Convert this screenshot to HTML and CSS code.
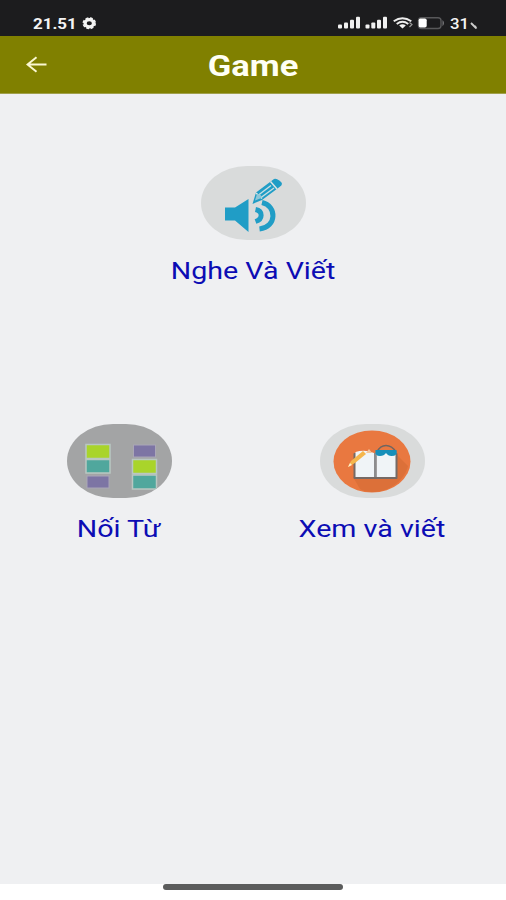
FILE: index.html
```html
<!DOCTYPE html>
<html lang="vi">
<head>
<meta charset="utf-8">
<title>Game</title>
<link rel="stylesheet" href="styles.css">
</head>
<body>
<div class="status">
  <span class="clock">21.51</span>
  <svg class="gear" viewBox="0 0 16 14"><ellipse cx="7.300" cy="6.300" rx="4.200" ry="3.600" fill="none" stroke="#f4f4f4" stroke-width="3.200"/><ellipse cx="7.300" cy="6.300" rx="6" ry="5.200" fill="none" stroke="#f4f4f4" stroke-width="1.600" stroke-dasharray="2.800 1.600"/></svg>
  <svg class="signals" viewBox="0 0 134 16">
    <g fill="#f1f1f1">
      <rect x="0" y="8.6" width="4" height="3.9" rx="1"/><rect x="6" y="6.6" width="4" height="5.9" rx="1"/><rect x="12" y="3.8" width="4" height="8.7" rx="1"/><rect x="18" y=".8" width="4" height="11.7" rx="1"/>
      <rect x="27.5" y="8.6" width="4" height="3.9" rx="1"/><rect x="33.3" y="6.6" width="4" height="5.9" rx="1"/><rect x="39" y="3.8" width="4" height="8.7" rx="1"/><rect x="45" y=".8" width="4" height="11.7" rx="1"/>
    </g>
    <path d="M55.7 5.3Q64.5-.9 73.3 5.3M58.7 8Q64.5 3.600 70.3 8" fill="none" stroke="#ededed" stroke-width="1.9"/>
    <path d="M61.2 9.500Q64.5 7 67.8 9.500L64.5 12.5Z" fill="#f1f1f1"/>
    <path d="M71.500 6.500l2.500 2-2.500 2.500" fill="none" stroke="#999" stroke-width="1.2"/>
    <rect x="80.5" y="1.7" width="22.5" height="10.8" rx="3" fill="none" stroke="#58585a" stroke-width="1.4"/>
    <path d="M104.500 4q3 3 0 6.3z" fill="#77777a"/>
    <rect x="80.7" y="2.5" width="8" height="9" rx="1.8" fill="#fff"/>
  </svg>
  <span class="percent">31</span>
  <svg class="tick" viewBox="0 0 8 8"><path d="M1 1l5 5M5 3.8l1.3 2.8" stroke="#ccc" stroke-width="1.9" fill="none"/></svg>
</div>
<header class="bar">
  <svg class="back" viewBox="0 0 22 18"><path d="M20.5 8.500H1.5M10.5 1.300L1.5 8.500l9 7.2" fill="none" stroke="#fbf8d2" stroke-width="2"/></svg>
  <h1><span class="title">Game</span></h1>
</header>
<main class="games">
  <a class="game wide">
    <svg class="pic light" viewBox="0 0 105 74">
      <g fill="#209dc6">
        <path d="M24 41.5H34L47.500 33V66L34 54.500H24Z"/>
        <path d="M54.500 43.500C62 45 62 53 54.500 55.500" fill="none" stroke="#209dc6" stroke-width="5"/>
        <path d="M61 36.500C76 40 76 61 58.500 63" fill="none" stroke="#209dc6" stroke-width="5"/>
        <path d="M51.500 38L55 26.500L73 13Q76 12 80.500 16.500Q82 19 78.500 21L61 34Z"/>
      </g>
      <path d="M57.500 29L70 19.500M60 31.500L73 22" stroke="#c9dde1" stroke-width="1.500"/>
      <path d="M69.500 15.500L76 23M55 27L61 32.500" stroke="#dce3e3" stroke-width="1.500"/>
      <path d="M56 28Q61 28 60.500 32L54 34.500Z" fill="#8fc7d7"/>
    </svg>
    <span class="name">Nghe Và Viết</span>
  </a>
  <a class="game">
    <svg class="pic dark" viewBox="0 0 105 74">
      <g stroke="#b9c7c2" stroke-width="1.500">
        <rect x="19" y="20.500" width="24" height="14" fill="#a9d42b"/><rect x="19" y="35.500" width="24" height="13.500" fill="#50a79d"/>
        <rect x="65.500" y="35.500" width="24" height="14" fill="#a9d42b"/><rect x="65.500" y="51" width="24" height="14" fill="#50a79d"/>
      </g>
      <g fill="#7d75a4" stroke="#aaa6b7"><rect x="20" y="52" width="22" height="12"/><rect x="66.500" y="21" width="22" height="12"/></g>
    </svg>
    <span class="name">Nối Từ</span>
  </a>
  <a class="game">
    <svg class="pic light" viewBox="0 0 105 74">
      <ellipse cx="52" cy="37.500" rx="38.500" ry="31" fill="#e97840"/>
      <path d="M33 53L77 31L88 42C84 58 68 68 52 68C47 68 43 67 40 65Z" fill="#dc7039"/>
      <rect x="33.500" y="29" width="44" height="26" rx="1" fill="#756a66"/>
      <path d="M35.500 28Q45 25 54 29V53H35.500ZM56.500 29Q66 26 75.500 28V53H56.500Z" fill="#f0f4f7"/>
      <path d="M54 29h2.500v24H54z" fill="#8c8c8e"/>
      <path d="M57 28Q60 21.500 66 21.500T76 28" fill="none" stroke="#6f6661" stroke-width="1.300"/>
      <path d="M55.500 26H76.500Q78 32 71.500 32Q68 32 66 29Q64 32 60 32Q54.500 32 55.500 26Z" fill="#168fba"/>
      <path d="M28 43L31 37L43 27L46 30L35 39Z" fill="#f5b64c"/><path d="M28 43l2-4 2 2z" fill="#fff0cf"/><path d="M46 29l3-4 3 4z" fill="#f3c79d"/>
    </svg>
    <span class="name">Xem và viết</span>
  </a>
</main>
<footer class="nav"><div class="handle"></div></footer>
</body>
</html>
```
FILE: styles.css
```css
* { box-sizing: border-box; }
body {
  margin: 0;
  height: 900px;
  display: flex;
  flex-direction: column;
  overflow: hidden;
  background: #fff;
  font-family: Roboto, "Liberation Sans", sans-serif;
}
svg { display: block; flex: none; }
.status {
  height: 36px;
  flex: none;
  display: flex;
  align-items: center;
  padding: 11px 0 0 33px;
  background: #1c1c1e;
  color: #f4f4f4;
}
.clock, .percent {
  font-size: 15px;
  line-height: 18px;
  font-weight: 700;
  transform-origin: left center;
}
.clock { width: 49px; transform: scaleX(1.13); }
.gear { width: 16px; height: 14px; }
.signals { width: 134px; height: 16px; margin-left: 240px; overflow: visible; }
.percent { width: 20px; margin-left: -22px; font-weight: 500; transform: scaleX(1.12); }
.tick { width: 8px; height: 8px; margin-top: 4px; }
.bar {
  height: 58px;
  flex: none;
  display: grid;
  grid-template-columns: 48px 1fr 48px;
  align-items: center;
  background: #808000;
  border-bottom: 1px solid #a0a04c;
}
.back { width: 22px; height: 18px; margin-left: 26px; }
h1 { margin: 3px 0 0; text-align: center; font-size: 29px; line-height: 34px; color: #fffff4; }
.title { display: inline-block; transform: scaleX(1.19); }
.games {
  height: 790px;
  flex: none;
  display: grid;
  grid-template-columns: 238px 268px;
  grid-template-rows: 258px 258px;
  padding-top: 72px;
  background: #eff0f2;
}
.game { display: flex; flex-direction: column; align-items: center; color: #0c0cb4; }
.game.wide { grid-column: 1 / -1; }
.pic { width: 105px; height: 74px; border-radius: 46px / 37px; }
.light { background: #d9dbdb; }
.dark { background: #a3a4a5; }
.name { margin-top: 17px; font-size: 23px; line-height: 30px; white-space: nowrap; transform: scaleX(1.245); }
.nav { flex: 1; display: flex; justify-content: center; background: #fff; }
.handle { width: 180px; height: 6px; border-radius: 3px; background: #5b5c5c; }
```
